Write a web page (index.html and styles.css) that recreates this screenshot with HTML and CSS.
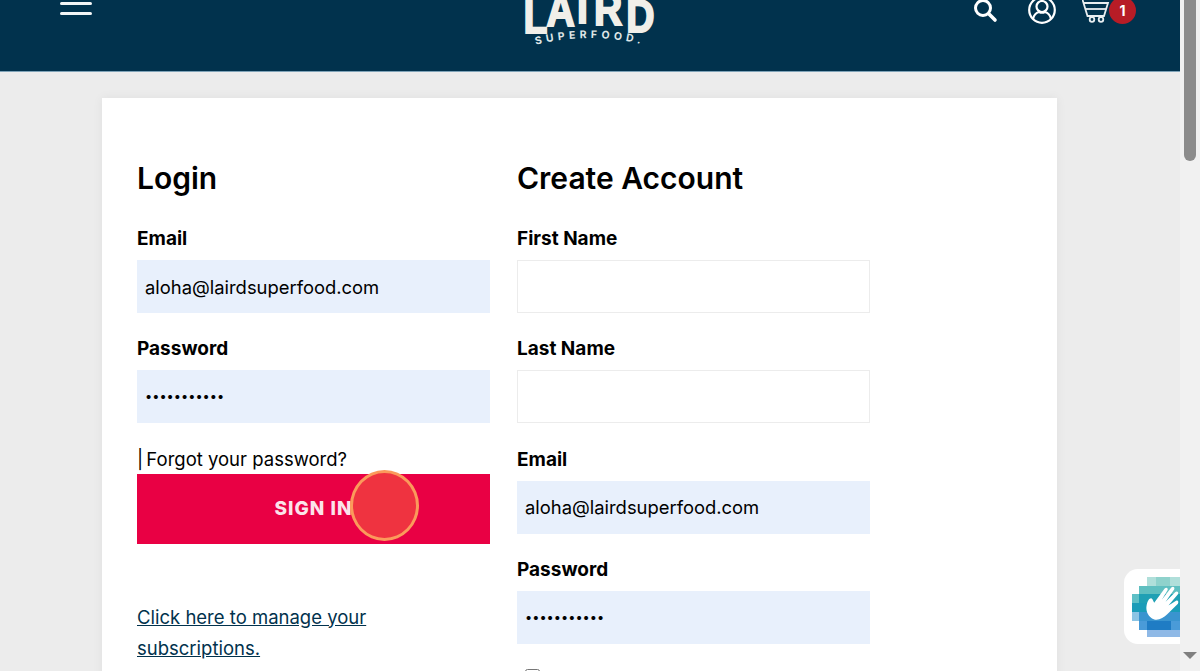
FILE: index.html
```html
<!DOCTYPE html>
<html lang="en">
  <head>
    <meta charset="UTF-8" />
    <meta name="viewport" content="width=device-width, initial-scale=1.0" />
    <title>Account - Laird Superfood</title>
    <link rel="stylesheet" href="styles.css">
  </head>
  <body>
    <div class="page">
      <header class="topbar">
        <button type="button" class="burger" aria-label="Menu">
          <span></span>
          <span></span>
        </button>
        <svg class="logo" width="150" height="50" viewBox="0 0 150 50" role="img" aria-label="Laird Superfood">
          <text class="logo-word" transform="scale(0.85 1)" y="33 26 23 25 32" x="10 37 73 93 131">LAIRD</text>
          <path id="logoArc" d="M20 45 Q75 31 130 45" fill="none" />
          <text class="logo-sub">
            <textPath href="#logoArc" startOffset="50%" text-anchor="middle">SUPERFOOD.</textPath>
          </text>
        </svg>
        <div class="tools">
          <svg class="tool-search" width="26" height="26" viewBox="0 0 26 26" fill="none" stroke="#fff" stroke-linecap="round">
            <circle cx="11" cy="10" r="7.500" stroke-width="3" />
            <path d="M17 16 L23 22" stroke-width="3.600" />
          </svg>
          <svg class="tool-user" width="30" height="30" viewBox="0 0 30 30" fill="none" stroke="#fff" stroke-width="2.200">
            <circle cx="15" cy="15" r="12.800" />
            <circle cx="15" cy="11.500" r="5.500" />
            <path d="M6 24 C7 19.500 10 17.500 12 17 C14 18 16 18 18 17 C20 17.500 23 19.500 24 24" />
          </svg>
          <div class="cart">
            <svg width="30" height="30" viewBox="0 0 30 30" fill="none" stroke="#e8eef1" stroke-width="1.800">
              <path d="M0 3 L5.500 21 H22 L26 8 H2" />
              <path d="M4 14 H24" />
              <circle cx="10" cy="24.500" r="2.300" />
              <circle cx="19" cy="24.500" r="2.300" />
            </svg>
            <span class="cart-count">1</span>
          </div>
        </div>
      </header>

      <main class="content">
        <section class="card">
          <div class="col">
            <h2>Login</h2>
            <form>
              <div class="field">
                <label for="loginEmail">Email</label>
                <input id="loginEmail" class="filled" type="text" value="aloha@lairdsuperfood.com" />
              </div>
              <div class="field">
                <label for="loginPass">Password</label>
                <input id="loginPass" class="filled secret" type="password" value="abcdefghijk" />
              </div>
              <p class="forgot"><span class="bar">|</span> Forgot your password?</p>
              <button type="button" class="signin">SIGN IN</button>
            </form>
            <a class="manage" href="#">Click here to manage your subscriptions.</a>
          </div>
          <div class="col">
            <h2>Create Account</h2>
            <form>
              <div class="field">
                <label for="firstName">First Name</label>
                <input id="firstName" type="text" />
              </div>
              <div class="field">
                <label for="lastName">Last Name</label>
                <input id="lastName" type="text" />
              </div>
              <div class="field">
                <label for="newEmail">Email</label>
                <input id="newEmail" class="filled" type="text" value="aloha@lairdsuperfood.com" />
              </div>
              <div class="field">
                <label for="newPass">Password</label>
                <input id="newPass" class="filled secret" type="password" value="abcdefghijk" />
              </div>
              <input class="check" type="checkbox" />
            </form>
          </div>
        </section>
      </main>

      <div class="click-dot"></div>

      <aside class="helper">
        <svg width="48" height="60" viewBox="0 0 48 60">
          <rect x="15" y="0" width="33" height="9" fill="#b0dfda" />
          <rect x="24" y="0" width="14" height="9" fill="#8fd2cc" />
          <rect x="7" y="9" width="41" height="8" fill="#5fbfc0" />
          <rect x="0" y="17" width="48" height="9" fill="#1fa0b4" />
          <rect x="0" y="17" width="7" height="9" fill="#5fc0c6" />
          <rect x="0" y="26" width="48" height="9" fill="#1a9cb8" />
          <rect x="0" y="35" width="48" height="9" fill="#3a94cf" />
          <rect x="0" y="35" width="7" height="9" fill="#8cc4e4" />
          <rect x="7" y="44" width="41" height="9" fill="#4a9bd8" />
          <rect x="15" y="44" width="24" height="9" fill="#1f7cc4" />
          <rect x="15" y="53" width="33" height="7" fill="#8fb9e6" />
          <path transform="translate(7 1) scale(0.95)" d="M8 29 C9 23 12 20 14 22 L16 26 L27 11 C29 9 31 11 30 13 L24 23 L34 10 C36 8 38 10 37 12 L28 25 L38 15 C40 13 42 15 41 17 L31 29 L39 24 C41 23 42 25 41 27 L30 38 C25 43 18 46 13 42 C9 39 7 34 8 29 Z" fill="#fff" />
        </svg>
      </aside>
    </div>

    <div class="scrollbar">
      <div class="thumb"></div>
      <div class="arrow"></div>
    </div>
  </body>
</html>
```

FILE: styles.css
```css
* {
  margin: 0;
  padding: 0;
  box-sizing: border-box;
}
body {
  width: 100vw;
  height: 100vh;
  display: flex;
  overflow: hidden;
  background-color: #ececec;
  color: #000;
  font-family: Inter, "Liberation Sans", sans-serif;
}
.page {
  position: relative;
  flex: 1;
  min-width: 0;
  overflow: hidden;
}
/* top bar, the page is scrolled a little so the icons are cut off */
.topbar {
  height: 72px;
  padding: 0 44px;
  background-color: #01324d;
  border-bottom: 1px solid #7fa3b8;
  display: grid;
  grid-template-columns: 1fr auto 1fr;
  align-items: start;
  overflow: hidden;
}
.burger {
  width: 32px;
  margin-left: 16px;
  padding-top: 2px;
  background: none;
  border: none;
  display: flex;
  flex-flow: column;
  gap: 7px;
}
.burger span {
  height: 3px;
  border-radius: 2px;
  background-color: #f2f5f6;
}
.logo {
  display: block;
}
.logo-word {
  font-family: "Liberation Sans", sans-serif;
  font-size: 46px;
  font-weight: bold;
  fill: #f1efe9;
  stroke: #f1efe9;
  stroke-width: 2px;
}
.logo-sub {
  font-family: Inter, sans-serif;
  font-size: 10.5px;
  font-weight: 700;
  letter-spacing: 4.2px;
  fill: #dfe6e6;
}
.tools {
  justify-self: end;
  display: flex;
  align-items: flex-start;
}
.tool-search {
  margin: -2px 29px 0 0;
}
.tool-user {
  margin: -5px 25px 0 0;
}
.cart {
  display: flex;
  margin-top: -5px;
}
.cart-count {
  width: 27px;
  height: 27px;
  margin: 2px 0 0 -3px;
  border-radius: 50%;
  background-color: #b71c26;
  color: #fff;
  font-size: 14px;
  font-weight: 700;
  line-height: 27px;
  text-align: center;
}
.content {
  padding: 26px 123px 0 102px;
}
.card {
  height: 700px;
  padding: 65px 35px 0;
  background-color: #fff;
  box-shadow: 0 0 10px rgba(0, 0, 0, 0.06);
  display: flex;
  gap: 27px;
}
.col {
  width: 353px;
}
h2 {
  height: 31px;
  margin-bottom: 33px;
  font-size: 30px;
  font-weight: 600;
  line-height: 31px;
}
.field {
  margin-bottom: 24.4px;
}
.field label {
  display: block;
  height: 23px;
  margin-bottom: 10px;
  font-size: 19px;
  font-weight: 700;
  line-height: 23px;
}
.field input {
  display: block;
  width: 100%;
  height: 53px;
  padding: 0 7px;
  border: 1px solid #ececec;
  background-color: #fff;
  color: #000;
  font-family: Inter, "Liberation Sans", sans-serif;
  font-size: 18.4px;
  outline: none;
}
.field input.filled {
  border-color: #e8f0fc;
  background-color: #e8f0fc;
}
.field input.secret {
  font-size: 12.8px;
}
.forgot {
  margin-top: -2px;
  height: 28px;
  font-size: 18.5px;
  line-height: 27px;
}
.bar {
  margin-right: -2px;
}
.signin {
  display: block;
  width: 100%;
  height: 70px;
  border: none;
  background-color: #e90044;
  color: #fbe3ea;
  font-family: Inter, "Liberation Sans", sans-serif;
  font-size: 19px;
  font-weight: 800;
  letter-spacing: 1px;
}
.manage {
  display: block;
  max-width: 250px;
  margin-top: 58px;
  color: #01324d;
  font-size: 18.5px;
  line-height: 31px;
}
.check {
  display: block;
  width: 15px;
  height: 15px;
  margin: 1px 0 0 8px;
}
/* recording cursor */
.click-dot {
  position: absolute;
  left: 350px;
  top: 470px;
  width: 69px;
  height: 71px;
  border: 3px solid #fb9a5b;
  border-radius: 50%;
  background-color: #ef3340;
}
.helper {
  position: absolute;
  right: 0;
  top: 569px;
  width: 56px;
  height: 75px;
  padding: 8px 0 0 8px;
  border-radius: 14px 0 0 14px;
  background-color: #fff;
  overflow: hidden;
}
.helper svg {
  display: block;
}
.scrollbar {
  position: relative;
  flex: 0 0 20px;
  background-color: #f1f1f1;
}
.thumb {
  width: 12px;
  height: 161px;
  margin-left: 4px;
  border-radius: 0 0 6px 6px;
  background-color: #8c8c8c;
}
.arrow {
  position: absolute;
  left: 3px;
  top: 652px;
  width: 0;
  height: 0;
  border-left: 7px solid transparent;
  border-right: 7px solid transparent;
  border-top: 7px solid #808080;
}
```
